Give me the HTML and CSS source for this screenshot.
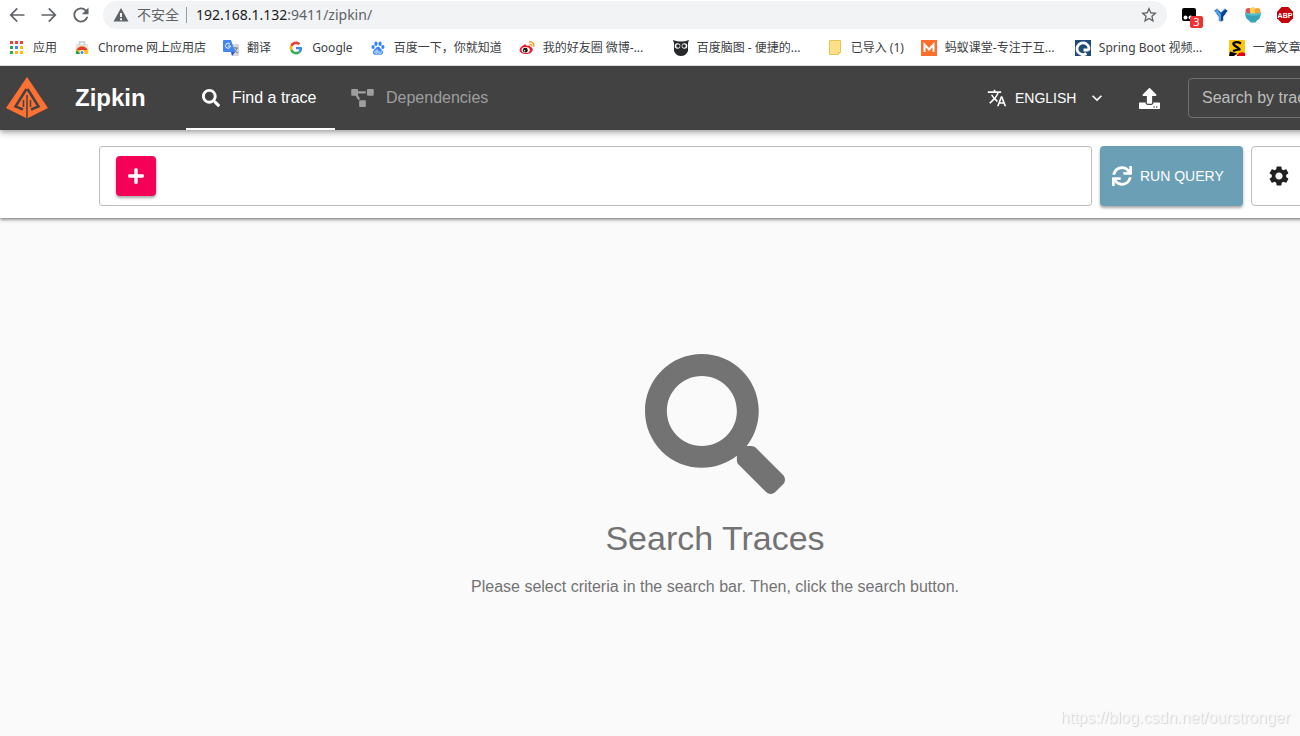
FILE: index.html
```
<!DOCTYPE html>
<html lang="zh-CN">
<head>
  <meta charset="UTF-8">
  <meta name="viewport" content="width=device-width, initial-scale=1">
  <title>Zipkin</title>
  <link rel="stylesheet" href="styles.css">
</head>
<body>

  <div class="browser">
    <div class="toolbar">
      <button class="nav-btn" type="button" aria-label="Back">
        <svg viewBox="0 0 24 24"><path d="M21 11H6.800l6.200-6.200L11.600 3.400 3 12l8.600 8.600 1.400-1.400L6.800 13H21z"/></svg>
      </button>
      <button class="nav-btn" type="button" aria-label="Forward">
        <svg viewBox="0 0 24 24"><path d="M3 11h14.200l-6.200-6.200 1.400-1.400L21 12l-8.600 8.600-1.400-1.400 6.200-6.200H3z"/></svg>
      </button>
      <button class="nav-btn" type="button" aria-label="Reload">
        <svg viewBox="0 0 24 24"><path d="M18.400 5.600A9 9 0 1 0 20.700 14h-2.300A6.800 6.800 0 1 1 16.800 7.200L13 11h8V3z"/></svg>
      </button>
      <div class="address">
        <svg class="warn" viewBox="0 0 16 16"><path d="M8 1 .5 14.500h15zM7 6h2v4H7zm0 5.200h2v2H7z" fill-rule="evenodd"/></svg>
        <span class="insecure">不安全</span>
        <span class="url">192.168.1.132<span>:9411/zipkin/</span></span>
        <button class="star" type="button" aria-label="Bookmark this page">
          <svg viewBox="2 2 20 20"><path d="M22 9.240l-7.190-.62L12 2 9.190 8.630 2 9.240l5.460 4.730L5.820 21 12 17.270 18.180 21l-1.630-7.030zM12 15.400l-3.760 2.270 1-4.280-3.320-2.880 4.380-.38L12 6.100l1.710 4.040 4.380.38-3.320 2.880 1 4.280z"/></svg>
        </button>
      </div>
      <div class="extensions">
        <span class="ext">
          <svg viewBox="0 0 16 16"><path d="M3 1h10q2 0 2 2v9q0 2-2 2H3q-2 0-2-2V3q0-2 2-2z" fill="#000"/><circle cx="4.500" cy="10.500" r="2" fill="#fff"/><circle cx="9.500" cy="10.500" r="2" fill="#fff"/></svg>
          <span class="badge">3</span>
        </span>
        <span class="ext">
          <svg viewBox="0 0 16 16"><path d="M1 3.500 4 1.500l4 3.500 4-3.500 3 2L10.500 10v3.500L8 15l-2.500-1.500V10z" fill="#1766b8" stroke="#d9dde2"/><path d="m2 4 2-1.500 4 5V14l-2-1V9.500z" fill="#4ba3e6"/><path d="m14 4-2-1.500-4 5V14l2-1V9.500z" fill="#0b3f87"/><path d="M6 2h4L8 5z" fill="#fff"/></svg>
        </span>
        <span class="ext">
          <svg viewBox="0 0 16 16"><circle cx="3.500" cy="4" r="3" fill="#d9535a"/><circle cx="8" cy="3.500" r="3.200" fill="#f7d154"/><circle cx="12.500" cy="4" r="3" fill="#f3a33a"/><path d="M0 5.500q8 2.500 16 0 0 6-4.500 8.500l-1 1.500h-5l-1-1.500Q0 11.500 0 5.500z" fill="#38a4b7"/><path d="M0 5.500q8 2.500 16 0l-.3 2q-7.700 2.500-15.400 0z" fill="#55bfc9"/></svg>
        </span>
        <span class="ext">
          <svg viewBox="0 0 16 16"><path d="M4.700 0h6.600L16 4.700v6.600L11.300 16H4.700L0 11.300V4.700z" fill="#c4000a"/><text x="8" y="11" class="abp">ABP</text></svg>
        </span>
      </div>
    </div>

    <nav class="bookmarks">
      <a href="#">
        <svg viewBox="0 0 16 16"><path d="M1 1h3v3H1zM6 1h3v3H6zM11 1h3v3h-3z" fill="#ea4335"/><path d="M1 6h3v3H1zM1 11h3v3H1z" fill="#34a853"/><path d="M6 6h3v3H6z" fill="#4285f4"/><path d="M11 6h3v3h-3zM6 11h3v3H6zM11 11h3v3h-3z" fill="#fbbc05"/></svg>
        <span>应用</span>
      </a>
      <a href="#">
        <svg viewBox="0 0 16 16"><path d="M2 4h12l1 10H1z" fill="#e3e4e6"/><path d="M5.500 5V2h5v3" fill="none" stroke="#c9cbcd" stroke-width="1.500"/><path d="M2 14v-2a6 6 0 0 1 12 0v2z" fill="#fbc116"/><path d="M2.500 10a6 6 0 0 1 11 0H8z" fill="#e33b2e"/><path d="M2.500 10 7 14H2v-2z" fill="#2ba24c"/><circle cx="8" cy="12.500" r="2" fill="#4285f4" stroke="#fff"/></svg>
        <span>Chrome 网上应用店</span>
      </a>
      <a href="#">
        <svg viewBox="0 0 16 16"><path d="M6 4h9q1 0 1 1v10q0 1-1 1H9z" fill="#d5d7da"/><path d="M9 8h6M12 7v1M14 8q-1 4-4 5M11 9q1 3 4 4" fill="none" stroke="#607d8b"/><path d="M1 0h7l4 12H1q-1 0-1-1V1q0-1 1-1z" fill="#4285f4"/><path d="M8 12h4l-3 4z" fill="#2a56c6"/><path d="M7 4.200A2.500 2.500 0 1 0 7.500 6H5" fill="none" stroke="#fff"/></svg>
        <span>翻译</span>
      </a>
      <a href="#">
        <svg viewBox="-6 -6 60 60"><path fill="#EA4335" d="M24 9.500c3.540 0 6.710 1.220 9.210 3.600l6.850-6.850C35.900 2.380 30.470 0 24 0 14.620 0 6.510 5.380 2.560 13.220l7.980 6.190C12.430 13.720 17.740 9.500 24 9.500z"/><path fill="#4285F4" d="M46.980 24.550c0-1.570-.15-3.090-.38-4.550H24v9.020h12.940c-.58 2.960-2.260 5.480-4.780 7.180l7.730 6c4.510-4.180 7.090-10.360 7.090-17.650z"/><path fill="#FBBC05" d="M10.530 28.590c-.48-1.450-.76-2.990-.76-4.590s.27-3.140.76-4.590l-7.980-6.190C.92 16.460 0 20.120 0 24c0 3.880.92 7.540 2.560 10.780l7.970-6.190z"/><path fill="#34A853" d="M24 48c6.480 0 11.930-2.130 15.890-5.810l-7.730-6c-2.150 1.450-4.920 2.300-8.160 2.300-6.260 0-11.570-4.220-13.470-9.910l-7.980 6.190C6.510 42.620 14.620 48 24 48z"/></svg>
        <span>Google</span>
      </a>
      <a href="#">
        <svg viewBox="-1 -1 18 18" fill="#3385ff"><ellipse cx="5.700" cy="3.200" rx="1.800" ry="2.500"/><ellipse cx="10.300" cy="3.200" rx="1.800" ry="2.500"/><ellipse cx="2.500" cy="6.800" rx="1.800" ry="2.200"/><ellipse cx="13.500" cy="6.800" rx="1.800" ry="2.200"/><path d="M8 6.500c2 0 2.500 2 4 3.200 3 2.800 1.500 6-1 6-1.500 0-2-.4-3-.4s-1.500.4-3 .4c-2.500 0-4-3.200-1-6C5.500 8.500 6 6.500 8 6.500z"/><path d="M7 9.500V14H5.500a1.300 1.300 0 0 1 0-2.600H7M9 11v3h2.500v-3" fill="none" stroke="#fff" stroke-width=".9"/></svg>
        <span>百度一下，你就知道</span>
      </a>
      <a href="#" class="long">
        <svg viewBox="0 0 16 16"><path d="M6 4.500q2-.5 1.500 1.500 4-1.500 4 1 3 1 2 3.500Q12 14 7 14T.5 10.500Q.5 7 6 4.500z" fill="#e6162d"/><ellipse cx="6.700" cy="10" rx="4.200" ry="3" fill="#fff"/><circle cx="6.300" cy="10.200" r="2.400" fill="#111"/><circle cx="5.600" cy="10.700" r=".8" fill="#fff"/><path d="M10 2q5-1 5 5M10.500 4.500q2.500-.5 2.300 2" fill="none" stroke="#f7931e" stroke-width="1.300"/></svg>
        <span>我的好友圈 微博-...</span>
      </a>
      <a href="#" class="long">
        <svg viewBox="0 0 16 16"><path d="M0 0q4 1.500 8 1.500T16 0l-1 3v8q-2 5-7 5t-7-5V3z" fill="#26292c"/><circle cx="4.500" cy="6" r="2.800" fill="#fff"/><circle cx="11.500" cy="6" r="2.800" fill="#fff"/><circle cx="5" cy="6" r="1.800" fill="#26292c"/><circle cx="11" cy="6" r="1.800" fill="#26292c"/></svg>
        <span>百度脑图 - 便捷的...</span>
      </a>
      <a href="#">
        <svg viewBox="0 0 16 16"><path d="M2.500.5h11v12l-2 2h-9z" fill="#ffe08a" stroke="#e8c64e"/><path d="M11.500 14.500v-2h2" fill="#fff3c4" stroke="#e8c64e"/></svg>
        <span>已导入 (1)</span>
      </a>
      <a href="#" class="long">
        <svg viewBox="0 0 16 16"><path d="M0 0h16v16H0z" fill="#ff6f2b"/><path d="M3.500 12V4.500L8 9.500l4.500-5V12" fill="none" stroke="#fff" stroke-width="2"/></svg>
        <span>蚂蚁课堂-专注于互...</span>
      </a>
      <a href="#" class="long">
        <svg viewBox="0 0 16 16"><path d="M0 0h16v16H0z" fill="#1d4a78"/><path d="M11.500 13.500A6 5.800 0 1 1 14 8q0 2-2 2H8.500" fill="none" stroke="#fff" stroke-width="2.800"/></svg>
        <span>Spring Boot 视频...</span>
      </a>
      <a href="#" class="long">
        <svg viewBox="0 0 16 16"><path d="M1 0h14q1 0 1 1v14H0V1q0-1 1-1z" fill="#ffc60a"/><path d="m0 16 1-4.500 7 2-3 2.500z" fill="#000"/><path d="M8 15q3-4 8-2v3H8z" fill="#e60012"/><path d="M12 3.500Q8.500 1.500 5.500 2.500T7 6.500t3.500 3T4 11" fill="none" stroke="#000" stroke-width="2.200"/></svg>
        <span>一篇文章</span>
      </a>
    </nav>
  </div>

  <div class="viewport">
    <div class="app">
      <header class="app-bar">
        <svg class="logo" viewBox="0 0 42 42"><path fill="#ff7033" d="M21 0 42 31 22 41h-2L0 31z"/><path fill="none" stroke="#424242" stroke-width="2.500" d="M20.500 12 9.500 29.500l7.500 3M21.500 12l11 17.500-7.500 3"/><path fill="none" stroke="#424242" stroke-width="1.500" d="M21 18v24M17.500 23v7M24.500 23v7"/></svg>
        <h1>Zipkin</h1>
        <nav class="tabs">
          <a href="#" class="tab active">
            <svg class="icon-find" viewBox="0 0 512 512"><path d="M505 442.700L405.300 343c-4.500-4.500-10.600-7-17-7H372c27.600-35.300 44-79.700 44-128C416 93.100 322.900 0 208 0S0 93.100 0 208s93.100 208 208 208c48.300 0 92.700-16.400 128-44v16.300c0 6.400 2.500 12.500 7 17l99.700 99.700c9.400 9.400 24.600 9.400 33.900 0l28.300-28.300c9.400-9.400 9.400-24.600.1-34zM208 336c-70.700 0-128-57.200-128-128 0-70.700 57.200-128 128-128 70.700 0 128 57.200 128 128 0 70.700-57.200 128-128 128z"/></svg>
            Find a trace
          </a>
          <a href="#" class="tab">
            <svg class="icon-deps" viewBox="0 0 640 512"><path d="M384 320H256c-17.670 0-32 14.330-32 32v128c0 17.670 14.330 32 32 32h128c17.670 0 32-14.330 32-32V352c0-17.670-14.330-32-32-32zM192 32c0-17.670-14.330-32-32-32H32C14.330 0 0 14.330 0 32v128c0 17.670 14.330 32 32 32h95.720l73.160 128.040C211.980 300.980 232.400 288 256 288h.28L192 175.510V128h224V64H192V32zM608 0H480c-17.670 0-32 14.330-32 32v128c0 17.670 14.330 32 32 32h128c17.670 0 32-14.330 32-32V32c0-17.670-14.330-32-32-32z"/></svg>
            Dependencies
          </a>
        </nav>
        <button class="language" type="button">
          <svg viewBox="0 0 24 24"><path d="M12.870 15.070l-2.540-2.510.03-.03c1.740-1.940 2.980-4.170 3.710-6.530H17V4h-7V2H8v2H1v1.990h11.170C11.500 7.920 10.440 9.750 9 11.350 8.070 10.320 7.300 9.190 6.690 8h-2c.73 1.630 1.730 3.170 2.980 4.560l-5.090 5.020L4 19l5-5 3.110 3.110.76-2.040zM18.500 10h-2L12 22h2l1.120-3h4.750L21 22h2l-4.500-12zm-2.620 7l1.620-4.330L19.120 17h-3.240z"/></svg>
          <span>ENGLISH</span>
          <svg viewBox="0 0 24 24"><path d="M16.590 8.590L12 13.170 7.410 8.590 6 10l6 6 6-6z"/></svg>
        </button>
        <button class="upload" type="button" aria-label="Upload JSON">
          <svg viewBox="0 0 512 512"><path d="M296 384h-80c-13.300 0-24-10.700-24-24V192h-87.700c-17.800 0-26.700-21.500-14.100-34.100L242.300 5.700c7.500-7.500 19.800-7.500 27.300 0l152.200 152.200c12.600 12.600 3.700 34.100-14.100 34.100H320v168c0 13.300-10.700 24-24 24zm216-8v112c0 13.300-10.700 24-24 24H24c-13.300 0-24-10.700-24-24V376c0-13.300 10.700-24 24-24h136v8c0 30.900 25.100 56 56 56h80c30.900 0 56-25.100 56-56v-8h136c13.300 0 24 10.700 24 24zm-124 88c0-11-9-20-20-20s-20 9-20 20 9 20 20 20 20-9 20-20zm64 0c0-11-9-20-20-20s-20 9-20 20 9 20 20 20 20-9 20-20z"/></svg>
        </button>
        <input class="trace-id" type="text" placeholder="Search by trace ID" aria-label="Search by trace ID">
      </header>

      <div class="search-bar">
        <div class="criteria">
          <button class="add" type="button" aria-label="Add criterion">
            <svg viewBox="0 0 448 512"><path d="M416 208H272V64c0-17.670-14.330-32-32-32h-32c-17.670 0-32 14.330-32 32v144H32c-17.670 0-32 14.330-32 32v32c0 17.670 14.330 32 32 32h144v144c0 17.670 14.330 32 32 32h32c17.670 0 32-14.330 32-32V304h144c17.670 0 32-14.330 32-32v-32c0-17.670-14.330-32-32-32z"/></svg>
          </button>
        </div>
        <button class="run" type="button">
          <svg viewBox="0 0 512 512"><path d="M440.650 12.570l4 82.770A247.160 247.160 0 0 0 255.830 8C134.730 8 33.910 94.920 12.290 209.820A12 12 0 0 0 24.090 224h49.050a12 12 0 0 0 11.670-9.260 175.910 175.910 0 0 1 317-56.940l-101.460-4.860a12 12 0 0 0-12.570 12v47.410a12 12 0 0 0 12 12H500a12 12 0 0 0 12-12V12a12 12 0 0 0-12-12h-47.370a12 12 0 0 0-11.980 12.570zM255.830 432a175.610 175.610 0 0 1-146-77.800l101.800 4.870a12 12 0 0 0 12.570-12v-47.400a12 12 0 0 0-12-12H12a12 12 0 0 0-12 12V500a12 12 0 0 0 12 12h47.350a12 12 0 0 0 12-12.600l-4.150-82.570A247.170 247.170 0 0 0 255.830 504c121.110 0 221.930-86.920 243.550-201.820a12 12 0 0 0-11.800-14.180h-49.050a12 12 0 0 0-11.670 9.260A175.860 175.860 0 0 1 255.830 432z"/></svg>
          RUN QUERY
        </button>
        <button class="settings" type="button" aria-label="Settings">
          <svg viewBox="0 0 24 24"><path d="M19.140 12.940c.04-.3.06-.61.06-.94 0-.32-.02-.64-.07-.94l2.030-1.580c.18-.14.23-.41.12-.61l-1.920-3.320c-.12-.22-.37-.29-.59-.22l-2.390.96c-.5-.38-1.030-.7-1.620-.94l-.36-2.540c-.04-.24-.24-.41-.48-.41h-3.840c-.24 0-.43.17-.47.41l-.36 2.540c-.59.24-1.130.57-1.620.94l-2.390-.96c-.22-.08-.47 0-.59.22L2.740 8.870c-.12.21-.08.47.12.61l2.030 1.580c-.05.3-.09.63-.09.94s.02.64.07.94l-2.030 1.580c-.18.14-.23.41-.12.61l1.920 3.320c.12.22.37.29.59.22l2.390-.96c.5.38 1.030.7 1.620.94l.36 2.540c.05.24.24.41.48.41h3.840c.24 0 .44-.17.47-.41l.36-2.540c.59-.24 1.130-.56 1.620-.94l2.390.96c.22.08.47 0 .59-.22l1.920-3.320c.12-.22.07-.47-.12-.61l-2.010-1.580zM12 15.600c-1.980 0-3.600-1.620-3.600-3.600s1.620-3.600 3.600-3.600 3.600 1.620 3.600 3.600-1.620 3.600-3.600 3.600z"/></svg>
        </button>
      </div>

      <main class="empty">
        <svg viewBox="0 0 512 512"><path d="M505 442.700L405.300 343c-4.500-4.500-10.600-7-17-7H372c27.600-35.300 44-79.700 44-128C416 93.100 322.900 0 208 0S0 93.100 0 208s93.100 208 208 208c48.300 0 92.700-16.400 128-44v16.300c0 6.400 2.500 12.500 7 17l99.700 99.700c9.400 9.400 24.600 9.400 33.900 0l28.300-28.300c9.400-9.400 9.400-24.600.1-34zM208 336c-70.700 0-128-57.200-128-128 0-70.700 57.200-128 128-128 70.700 0 128 57.200 128 128 0 70.700-57.200 128-128 128z"/></svg>
        <h2>Search Traces</h2>
        <p>Please select criteria in the search bar. Then, click the search button.</p>
      </main>
    </div>
  </div>

  <div class="watermark">https://blog.csdn.net/ourstronger</div>

</body>
</html>
```
FILE: styles.css
```
* {
  box-sizing: border-box;
}

body {
  margin: 0;
  min-height: 100vh;
  background: #fafafa;
  font-family: "Liberation Sans", Arial, sans-serif;
}

button {
  margin: 0;
  padding: 0;
  border: none;
  background: none;
  font-family: inherit;
  cursor: pointer;
}

svg {
  display: block;
  flex: none;
}

a {
  text-decoration: none;
}

/* browser chrome */
.browser {
  background: #fff;
  border-bottom: 1px solid #dadce0;
  font-family: "Noto Sans", "Noto Sans CJK SC", sans-serif;
  color: #3c4043;
  overflow: hidden;
}

.toolbar {
  display: flex;
  align-items: center;
  gap: 12px;
  height: 30px;
  padding-left: 7px;
}

.nav-btn svg {
  width: 20px;
  height: 20px;
  fill: #5f6368;
}

.address {
  flex: 1;
  display: flex;
  align-items: center;
  height: 28px;
  padding: 0 10px;
  border-radius: 14px;
  background: #f1f3f4;
  font-size: 14px;
  line-height: 20px;
  color: #5f6368;
}

.warn {
  width: 16px;
  height: 16px;
  fill: #5f6368;
}

.insecure {
  margin-left: 8px;
  padding-right: 7px;
  white-space: nowrap;
}

.url {
  padding-left: 9px;
  border-left: 1px solid #9aa0a6;
  line-height: 16px;
  color: #202124;
}

.url span {
  color: #5f6368;
}

.star {
  margin-left: auto;
}

.star svg {
  width: 16px;
  height: 16px;
  fill: #5f6368;
}

.extensions {
  display: flex;
  gap: 16px;
  padding: 0 7px 0 2px;
}

.ext {
  position: relative;
}

.ext svg {
  width: 16px;
  height: 16px;
}

.badge {
  position: absolute;
  left: 9px;
  top: 9px;
  width: 13px;
  height: 12px;
  border-radius: 2px;
  background: #ee3131;
  color: #fff;
  font-size: 11px;
  line-height: 12px;
  text-align: center;
}

.abp {
  fill: #fff;
  font: bold 7px "Liberation Sans", sans-serif;
  text-anchor: middle;
}

.bookmarks {
  display: flex;
  align-items: center;
  gap: 17px;
  height: 35px;
  padding-left: 9px;
}

.bookmarks a {
  flex: none;
  display: flex;
  align-items: center;
  gap: 8px;
  font-size: 12px;
  line-height: 16px;
  color: #3c4043;
  white-space: nowrap;
}

.bookmarks .long {
  width: 137px;
}

.bookmarks svg {
  width: 16px;
  height: 16px;
}

.viewport {
  overflow: hidden;
}

/* app is wider than the window, right side is cut off */
.app {
  width: 110%;
}

.app-bar {
  position: relative;
  display: flex;
  align-items: center;
  height: 64px;
  padding: 0 24px 0 6px;
  background: #424242;
  color: #fff;
  box-shadow: 0 2px 4px -1px rgba(0,0,0,0.2), 0 4px 5px rgba(0,0,0,0.14), 0 1px 10px rgba(0,0,0,0.12);
}

.logo {
  width: 42px;
  height: 42px;
}

h1 {
  width: 111px;
  margin: 0 0 0 27px;
  font-size: 24px;
  line-height: 32px;
}

.tabs {
  display: flex;
  align-self: stretch;
}

.tab {
  display: flex;
  align-items: center;
  gap: 12px;
  min-width: 149px;
  padding: 0 16px;
  border-top: 2px solid transparent;
  border-bottom: 2px solid transparent;
  font-size: 16px;
  color: #9e9e9e;
  fill: #9e9e9e;
}

.tab.active {
  border-bottom-color: #fff;
  color: #fff;
  fill: #fff;
}

.icon-find {
  width: 18px;
  height: 18px;
}

.icon-deps {
  width: 23px;
  height: 18px;
}

.language {
  display: flex;
  align-items: center;
  gap: 8px;
  margin-left: auto;
  color: #fff;
  font-size: 14px;
  fill: #fff;
}

.language span {
  min-width: 64px;
  text-align: left;
}

.language svg {
  width: 20px;
  height: 20px;
}

.upload {
  margin: 0 28px 0 32px;
}

.upload svg {
  width: 21px;
  height: 21px;
  fill: #fff;
}

.trace-id {
  width: 218px;
  height: 40px;
  padding: 0 13px;
  border: 1px solid #6f6f6f;
  border-radius: 4px;
  background: transparent;
  color: #fff;
  font-family: inherit;
  font-size: 16px;
}

.trace-id::placeholder {
  color: #bdbdbd;
  opacity: 1;
}

.search-bar {
  display: flex;
  gap: 8px;
  padding: 16px 99px 12px;
  background: #fff;
  box-shadow: 0 1px 3px rgba(0,0,0,0.4), 0 2px 4px rgba(0,0,0,0.2);
}

.criteria {
  flex: 1;
  display: flex;
  align-items: center;
  height: 60px;
  padding: 0 16px;
  border: 1px solid #bdbdbd;
  border-radius: 3px;
}

.add {
  display: flex;
  align-items: center;
  justify-content: center;
  width: 40px;
  height: 40px;
  border-radius: 4px;
  background: #f50057;
  box-shadow: 0 2px 3px rgba(0,0,0,0.35);
}

.add svg {
  width: 16px;
  height: 18px;
  fill: #fff;
}

.run {
  display: flex;
  align-items: center;
  gap: 8px;
  width: 143px;
  padding-left: 12px;
  border-radius: 4px;
  background: #6b9fb6;
  box-shadow: 0 2px 3px rgba(0,0,0,0.35);
  color: #fff;
  font-size: 14px;
  white-space: nowrap;
}

.run svg {
  width: 20px;
  height: 20px;
  fill: #fff;
}

.settings {
  width: 80px;
  padding-left: 15px;
  border: 1px solid #bdbdbd;
  border-radius: 4px;
}

.settings svg {
  width: 24px;
  height: 24px;
  fill: #212121;
}

.empty {
  display: flex;
  flex-direction: column;
  align-items: center;
  padding-top: 136px;
  color: #737373;
}

.empty svg {
  width: 140px;
  height: 140px;
  fill: #737373;
}

h2 {
  margin: 24px 0 16px;
  font-size: 34px;
  font-weight: normal;
  line-height: 40px;
}

.empty p {
  margin: 0;
  font-size: 16px;
  line-height: 26px;
}

.watermark {
  position: fixed;
  right: 10px;
  bottom: 8px;
  font-size: 16px;
  line-height: 20px;
  color: #f6f6f6;
  text-shadow: 1px 1px 1px #d4d4d4;
}
```
